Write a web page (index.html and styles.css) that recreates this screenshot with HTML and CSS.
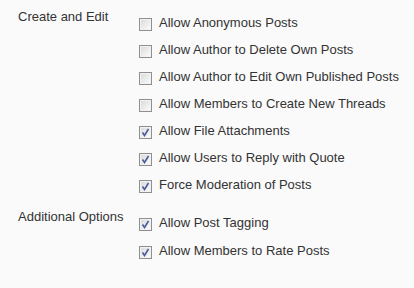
FILE: index.html
```html
<!DOCTYPE html>
<html>
  <head>
    <meta charset="utf-8">
    <title>Forum settings</title>
    <link rel="stylesheet" href="styles.css">
  </head>
  <body>
    <div class="settings">
      <div class="group">
        <div class="group-label">Create and Edit</div>
        <ul class="options">
          <li><span class="box"></span>Allow Anonymous Posts</li>
          <li><span class="box"></span>Allow Author to Delete Own Posts</li>
          <li><span class="box"></span>Allow Author to Edit Own Published Posts</li>
          <li><span class="box"></span>Allow Members to Create New Threads</li>
          <li><span class="box checked"><svg width="11" height="11" viewBox="0 0 11 11"><path d="M2.5 5.5 L4.5 8.5 L8.5 2" fill="none" stroke="#4a5b9e" stroke-width="1.6"/></svg></span>Allow File Attachments</li>
          <li><span class="box checked"><svg width="11" height="11" viewBox="0 0 11 11"><path d="M2.5 5.5 L4.5 8.5 L8.5 2" fill="none" stroke="#4a5b9e" stroke-width="1.6"/></svg></span>Allow Users to Reply with Quote</li>
          <li><span class="box checked"><svg width="11" height="11" viewBox="0 0 11 11"><path d="M2.5 5.5 L4.5 8.5 L8.5 2" fill="none" stroke="#4a5b9e" stroke-width="1.6"/></svg></span>Force Moderation of Posts</li>
        </ul>
      </div>
      <div class="group">
        <div class="group-label">Additional Options</div>
        <ul class="options">
          <li><span class="box checked"><svg width="11" height="11" viewBox="0 0 11 11"><path d="M2.5 5.5 L4.5 8.5 L8.5 2" fill="none" stroke="#4a5b9e" stroke-width="1.6"/></svg></span>Allow Post Tagging</li>
          <li><span class="box checked"><svg width="11" height="11" viewBox="0 0 11 11"><path d="M2.5 5.5 L4.5 8.5 L8.5 2" fill="none" stroke="#4a5b9e" stroke-width="1.6"/></svg></span>Allow Members to Rate Posts</li>
        </ul>
      </div>
    </div>
  </body>
</html>
```

FILE: styles.css
```css
body {
  margin: 0;
  background: #fafafa;
  font-family: "Liberation Sans", Arial, sans-serif;
  font-size: 13px;
  line-height: 15px;
  color: #333;
}
.settings {
  padding: 9px 0 0 18px;
}
.group {
  display: grid;
  grid-template-columns: 121px 1fr;
  margin-bottom: 5px;
}
.options {
  list-style: none;
  margin: 0;
  padding: 6px 0 0 0;
}
.options li {
  display: flex;
  align-items: flex-start;
  height: 27px;
}
.group + .group .options li {
  height: 28px;
}
.box {
  flex: none;
  width: 11px;
  height: 11px;
  margin: 3px 7px 0 0;
  border: 1px solid #8f8f8f;
  background: linear-gradient(135deg, #d8d8d8, #fdfdfd);
  box-shadow: inset 0 0 0 1px #f2f2f2;
}
.box svg {
  display: block;
}
```
